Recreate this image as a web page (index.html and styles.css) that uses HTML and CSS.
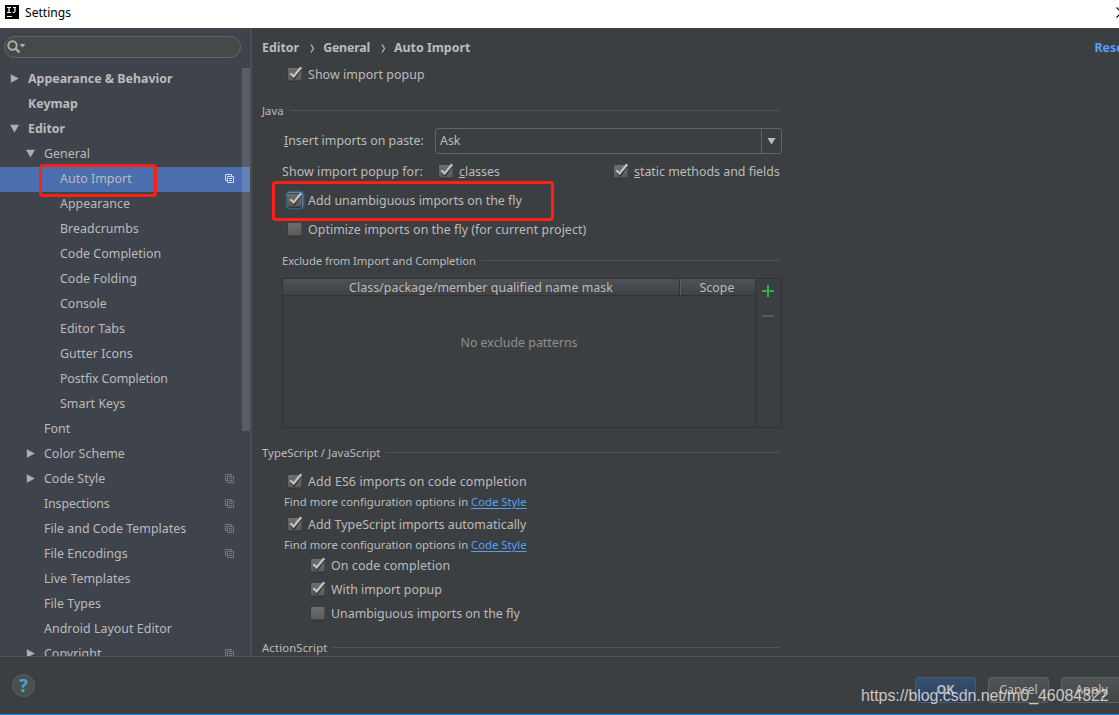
FILE: index.html
```html
<!DOCTYPE html>
<html lang="en">
<head>
<meta charset="utf-8">
<title>Settings</title>
<link rel="stylesheet" href="styles.css">
</head>
<body>
<svg class="defs" width="0" height="0">
  <defs>
    <linearGradient id="boxfill" x1="0" y1="0" x2="0" y2="1"><stop offset="0" stop-color="#6e6e6e"/><stop offset="1" stop-color="#5a5a5a"/></linearGradient>
  </defs>
  <symbol id="off" viewBox="0 0 16 16"><rect x=".5" y="2.500" width="14.500" height="13.500" rx="2" fill="#333536"/><rect x="1" y="2" width="13.500" height="12.500" rx="1" fill="url(#boxfill)"/></symbol>
  <symbol id="on" viewBox="0 0 16 16"><use href="#off"/><path d="M4 8.800 7 12.200 13.800 3" fill="none" stroke="#2b2b2b" stroke-width="2.200"/><path d="M3.300 7.200 6.600 10.600 14.200 1.300" fill="none" stroke="#c2c2c2" stroke-width="2.300"/></symbol>
  <symbol id="right" viewBox="0 0 9 9"><path d="M.8.2 8.8 4.5.8 8.8z" fill="#adadad"/></symbol>
  <symbol id="down" viewBox="0 0 9 9"><path d="M0 .8H9L4.5 8.6z" fill="#adadad"/></symbol>
  <symbol id="copy" viewBox="0 0 9 9"><path d="M2 6.5H.5V.5H6.500V2M2.500 2.500H8.500V8.500H2.500zM4 4.500H7M4 6.500H7" fill="none" stroke="currentColor"/></symbol>
</svg>
<div class="window">
  <header class="titlebar">
    <svg width="14" height="14" viewBox="0 0 14 14"><path d="M0 0H14V14H0z" fill="#000"/><path d="M2 2.500H6M4 2.500V7.500M2 7.500H6M8 2.500H11M10 2.500V6Q10 7.500 8.500 7.500H7.500" fill="none" stroke="#fff" stroke-width="1.200"/><path d="M2 11.500H7" stroke="#fff"/></svg>
    <span class="title">Settings</span>
    <svg class="close" width="3" height="11" viewBox="0 0 3 11"><path d="M.5.5 5.500 5.500.5 10.500" fill="none" stroke="#000" stroke-width="1.200"/></svg>
  </header>
  <div class="body">
    <aside class="sidebar">
      <div class="search"><svg width="19" height="14" viewBox="0 0 19 14"><circle cx="5.500" cy="5.500" r="4.200" fill="none" stroke="#adadad" stroke-width="2"/><path d="M8.500 8.500 12.500 12.500" stroke="#adadad" stroke-width="2.400"/><path d="M12.500 4H18.500L15.500 7.500z" fill="#adadad"/></svg></div>
      <ul class="tree">
        <li class="node top"><svg class="arrow"><use href="#right"/></svg>Appearance &amp; Behavior</li>
        <li class="node top"><i class="arrow"></i>Keymap</li>
        <li class="node top"><svg class="arrow"><use href="#down"/></svg>Editor</li>
        <li class="node second"><svg class="arrow"><use href="#down"/></svg>General</li>
        <li class="node third selected">Auto Import<svg class="copy"><use href="#copy"/></svg></li>
        <li class="node third">Appearance</li>
        <li class="node third">Breadcrumbs</li>
        <li class="node third">Code Completion</li>
        <li class="node third">Code Folding</li>
        <li class="node third">Console</li>
        <li class="node third">Editor Tabs</li>
        <li class="node third">Gutter Icons</li>
        <li class="node third tight">Postfix Completion</li>
        <li class="node third">Smart Keys</li>
        <li class="node second"><i class="arrow"></i>Font</li>
        <li class="node second"><svg class="arrow"><use href="#right"/></svg>Color Scheme</li>
        <li class="node second"><svg class="arrow"><use href="#right"/></svg>Code Style<svg class="copy"><use href="#copy"/></svg></li>
        <li class="node second tight"><i class="arrow"></i>Inspections<svg class="copy"><use href="#copy"/></svg></li>
        <li class="node second"><i class="arrow"></i>File and Code Templates<svg class="copy"><use href="#copy"/></svg></li>
        <li class="node second"><i class="arrow"></i>File Encodings<svg class="copy"><use href="#copy"/></svg></li>
        <li class="node second"><i class="arrow"></i>Live Templates</li>
        <li class="node second"><i class="arrow"></i>File Types</li>
        <li class="node second"><i class="arrow"></i>Android Layout Editor</li>
        <li class="node second"><svg class="arrow"><use href="#right"/></svg>Copyright<svg class="copy"><use href="#copy"/></svg></li>
      </ul>
      <div class="scrollbar"></div>
    </aside>
    <main class="panel">
      <nav class="crumbs">
        <b class="c1">Editor</b><svg width="5" height="9" viewBox="0 0 5 9"><path d="M1 .5 3.500 4.500 1 8.500" fill="none" stroke="#bbb" stroke-width="1.200"/></svg><b class="c2">General</b><svg width="5" height="9" viewBox="0 0 5 9"><path d="M1 .5 3.500 4.500 1 8.500" fill="none" stroke="#bbb" stroke-width="1.200"/></svg><b>Auto Import</b>
        <b class="reset">Reset</b>
      </nav>
      <label class="check show"><svg class="box"><use href="#on"/></svg>Show import popup</label>
      <h2 class="group java">Java</h2>
      <div class="paste"><span class="paste-label"><u>I</u>nsert imports on paste:</span>
        <div class="combo"><span class="value">Ask</span><span class="drop"><svg width="9" height="7" viewBox="0 0 9 7"><path d="M.5 0H8.500L4.500 6.500z" fill="#bbb"/></svg></span></div>
      </div>
      <div class="popup-for"><span class="for-label">Show import popup for:</span>
        <label class="inline first"><svg class="box"><use href="#on"/></svg><span><u>c</u>lasses</span></label>
        <label class="inline"><svg class="box"><use href="#on"/></svg><span><u>s</u>tatic methods and fields</span></label>
      </div>
      <label class="check unambiguous"><svg class="box focused"><use href="#on"/></svg>Add unambiguous imports on the fly</label>
      <label class="check optimize"><svg class="box"><use href="#off"/></svg>Optimize imports on the fly (for current project)</label>
      <h2 class="group exclude">Exclude from Import and Completion</h2>
      <div class="table">
        <div class="grid">
          <div class="head"><span class="mask">Class/package/member qualified name mask</span><span class="scope">Scope</span></div>
          <div class="empty">No exclude patterns</div>
        </div>
        <div class="tools">
          <svg width="12" height="12" viewBox="0 0 12 12"><path d="M6 0V12M0 6H12" stroke="#2fae4e" stroke-width="2"/></svg>
          <svg width="12" height="2" viewBox="0 0 12 2"><path d="M0 1H12" stroke="#595959" stroke-width="2"/></svg>
        </div>
      </div>
      <h2 class="group typescript">TypeScript / JavaScript</h2>
      <label class="check es6"><svg class="box"><use href="#on"/></svg>Add ES6 imports on code completion</label>
      <p class="hint">Find more configuration options in <a>Code Style</a></p>
      <label class="check auto"><svg class="box"><use href="#on"/></svg>Add TypeScript imports automatically</label>
      <p class="hint second-hint">Find more configuration options in <a>Code Style</a></p>
      <label class="check nested on-code"><svg class="box"><use href="#on"/></svg>On code completion</label>
      <label class="check nested"><svg class="box"><use href="#on"/></svg>With import popup</label>
      <label class="check nested"><svg class="box"><use href="#off"/></svg>Unambiguous imports on the fly</label>
      <h2 class="group action">ActionScript</h2>
    </main>
  </div>
  <footer class="footer">
    <span class="help">?</span>
    <span class="button ok">OK</span><span class="button">Cancel</span><span class="button">Apply</span>
  </footer>
  <div class="mark mark-tree"></div>
  <div class="mark mark-option"></div>
  <div class="watermark">https://blog.csdn.net/m0_46084322</div>
</div>
</body>
</html>
```
FILE: styles.css
```css
* { box-sizing: border-box; }
body { margin: 0; overflow: hidden; background: #3c3f41; color: #bbb; font: 12.4px/18px "Noto Sans", "Open Sans", sans-serif; }
.defs { position: absolute; }
svg { flex: none; }
.window { position: relative; width: 1119px; height: 715px; overflow: hidden; display: flex; flex-direction: column; white-space: nowrap; }

.titlebar { flex: none; height: 28px; background: #fff; color: #000; display: flex; align-items: center; padding: 0 0 4px 5px; font-size: 12.1px; }
.title { margin: 2px 0 0 6px; }
.close { margin-left: auto; }

.body { flex: none; height: 628px; display: flex; overflow: hidden; }
.sidebar { position: relative; flex: none; width: 252px; border-right: 2px solid #4b4e50; background: #3f434c; overflow: hidden; padding-top: 8px; }
.search { width: 237px; height: 22px; margin-left: 4px; border: 1px solid #646464; border-radius: 11px; background: #45494a; display: flex; align-items: center; padding-left: 2px; }
.tree { list-style: none; margin: 9px 0 0; padding: 0; }
.node { height: 25px; display: flex; align-items: center; padding-bottom: 2px; font-size: 12.4px; letter-spacing: .04px; }
.top { padding-left: 10px; font-weight: bold; letter-spacing: 0; }
.second { padding-left: 26px; }
.third { padding-left: 60px; }
.tight { letter-spacing: -.13px; }
.arrow { width: 9px; height: 9px; margin-right: 9px; flex: none; }
.selected { background: #4b6eaf; }
.copy { width: 9px; height: 9px; margin-left: auto; margin-right: 16px; color: #75787c; }
.selected .copy { color: #d5d9e0; }
.scrollbar { position: absolute; top: 40px; right: 0; width: 8px; height: 363px; background: rgba(255, 255, 255, .14); }

.panel { flex: 1; min-width: 0; padding-left: 10px; overflow: hidden; }
.crumbs { height: 38px; padding-top: 2px; display: flex; align-items: center; }
.crumbs svg { margin: 1px 8px 0 11px; }
.c2 { letter-spacing: -.2px; }
.reset { margin-left: auto; margin-right: -10px; color: #589df6; }
.check { height: 18px; display: flex; align-items: center; margin-left: 25px; }
.show { letter-spacing: .08px; }
.box { width: 16px; height: 16px; margin: -1px 5px 1px 0; }
.focused { border-radius: 3px; box-shadow: inset 0 0 0 1px #5e88b8, 0 0 2px 1px #43658c; }
.group { height: 18px; margin: 0; display: flex; align-items: center; font-size: 11.3px; font-weight: normal; letter-spacing: .03px; width: 518px; }
.group::after { content: ""; flex: 1; height: 1px; margin: -2px 0 0 6px; background: #515456; }
.java { margin-top: 18px; }
.paste { display: flex; align-items: center; height: 26px; margin: 8px 0 0 22px; }
.paste-label { width: 151px; }
.combo { width: 347px; height: 26px; border: 1px solid #646464; border-radius: 3px; display: flex; padding-left: 4px; line-height: 24px; }
.value { flex: 1; }
.drop { width: 20px; border-left: 1px solid #646464; display: flex; align-items: center; justify-content: center; padding-right: 1px; }
.popup-for { height: 18px; display: flex; align-items: center; margin: 9px 0 0 20px; }
.for-label { width: 156px; letter-spacing: .09px; }
.inline { display: flex; align-items: center; }
.first { width: 175px; }
.unambiguous { margin-top: 11px; }
.optimize { margin-top: 11px; letter-spacing: .04px; }
.exclude { margin: 13px 0 0 20px; width: 497px; letter-spacing: -.09px; }
.table { width: 500px; height: 150px; margin: 8px 0 0 20px; border: 1px solid #323232; display: flex; }
.grid { flex: 1; }
.head { height: 17px; display: flex; line-height: 17px; text-align: center; background: linear-gradient(#4e5254, #3e4244); border-bottom: 1px solid #303233; }
.mask { flex: 1; border-right: 1px solid #303233; letter-spacing: .04px; }
.scope { width: 75px; padding-right: 2px; border-left: 1px solid #5b5e60; }
.empty { text-align: center; padding-top: 38px; color: #8f9090; }
.tools { width: 26px; border-left: 1px solid #323232; display: flex; flex-direction: column; align-items: center; padding: 6px 2px 0 0; gap: 18px; }
.typescript { margin-top: 16px; letter-spacing: .05px; }
.es6 { margin-top: 11px; letter-spacing: .13px; }
.hint { height: 18px; margin: 2px 0 0 22px; font-size: 11.3px; }
.hint a { color: #589df6; text-decoration: underline; text-underline-offset: 2px; }
.auto { margin-top: 5px; letter-spacing: .03px; }
.second-hint { margin-top: 2px; }
.nested { margin: 6px 0 0 48px; }
.on-code { margin-top: 3px; letter-spacing: .1px; }
.action { margin-top: 16px; letter-spacing: .15px; }

.footer { flex: 1; display: flex; align-items: flex-start; gap: 12px; border-top: 1px solid #555; border-bottom: 1px solid #1c86d8; padding: 20px 0 0 12px; }
.help { width: 23px; height: 23px; margin-top: -3px; margin-right: auto; border: 1px solid #5c6062; border-radius: 50%; background: #4b4f51; color: #49a3d0; font: bold 18px/21px "Noto Sans", sans-serif; text-align: center; }
.button { flex: none; width: 61px; height: 26px; border: 1px solid #5e6162; border-radius: 3px; background: linear-gradient(#505557, #414648); line-height: 24px; text-align: center; }
.ok { background: linear-gradient(#365070, #2c3e58); border-color: #4c5a6c; font-weight: bold; }
.footer .button:last-child { margin-right: -3px; }

.mark { position: absolute; border: 3px solid #ff2015; border-radius: 4px; }
.mark-tree { left: 39px; top: 164px; width: 118px; height: 33px; }
.mark-option { left: 272px; top: 181px; width: 282px; height: 40px; }
.watermark { position: absolute; left: 861px; top: 687px; font: 16px/18px "Liberation Sans", Arial, sans-serif; letter-spacing: -.07px; color: rgba(225, 225, 225, .85); }
```
